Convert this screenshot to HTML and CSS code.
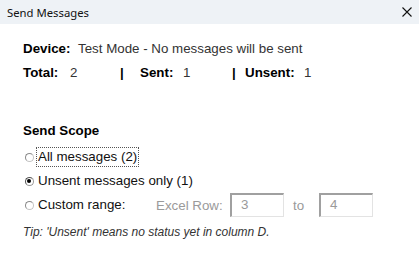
FILE: index.html
```html
<!DOCTYPE html>
<html>
<head>
<meta charset="utf-8">
<title>Send Messages</title>
<link rel="stylesheet" href="styles.css">
</head>
<body>
<div class="window">
  <div class="titlebar">
    <span class="title">Send Messages</span>
    <svg class="close" width="10" height="10" viewBox="0 0 10 10"><path d="M0.5 0.5 L9.5 9.5 M9.5 0.5 L0.5 9.5" stroke="#111" stroke-width="1.1" fill="none"/></svg>
  </div>
  <div class="content">
    <div class="row device-row">
      <span class="lbl w-device">Device:</span>
      <span class="val">Test Mode - No messages will be sent</span>
    </div>
    <div class="row counts-row">
      <span class="lbl w-total">Total:</span>
      <span class="val w-v1">2</span>
      <span class="lbl w-sep1">|</span>
      <span class="lbl w-sent">Sent:</span>
      <span class="val w-v2">1</span>
      <span class="lbl w-sep2">|</span>
      <span class="lbl w-unsent">Unsent:</span>
      <span class="val">1</span>
    </div>

    <div class="row scope-title">Send Scope</div>

    <div class="radio-row first-radio">
      <span class="radio"></span>
      <span class="rlabel focused">All messages (2)</span>
    </div>
    <div class="radio-row">
      <span class="radio checked"></span>
      <span class="rlabel">Unsent messages only (1)</span>
    </div>
    <div class="radio-row custom-row">
      <span class="radio"></span>
      <span class="rlabel w-custom">Custom range:</span>
      <span class="dim w-excel">Excel Row:</span>
      <span class="box">3</span>
      <span class="dim w-to">to</span>
      <span class="box">4</span>
    </div>
    <div class="tip">Tip: 'Unsent' means no status yet in column D.</div>
  </div>
</div>
</body>
</html>
```
FILE: styles.css
```css
html, body {
  margin: 0;
  padding: 0;
  background: #ffffff;
}
body {
  font-family: "Liberation Sans", Arial, sans-serif;
  font-size: 13.33px;
  color: #000;
}
.window {
  width: 419px;
  height: 255px;
  background: #fff;
}
.titlebar {
  height: 24px;
  background: #eef2f6;
  display: flex;
  align-items: center;
  justify-content: space-between;
  padding: 0 7px 0 7px;
}
.title {
  font-family: "Noto Sans", "Open Sans", sans-serif;
  font-size: 11.3px;
  color: #111;
}
.close {
  display: block;
}
.content {
  padding: 17px 0 0 23px;
}
.row {
  display: flex;
  align-items: center;
  height: 16px;
  line-height: 16px;
  white-space: nowrap;
}
.counts-row {
  margin-top: 8px;
}
.lbl {
  font-weight: bold;
  color: #000;
}
.val {
  color: #333;
}
.w-device { width: 55px; }
.w-total { width: 47px; }
.w-v1 { width: 50px; }
.w-sep1 { width: 20px; }
.w-sent { width: 43px; }
.w-v2 { width: 49px; }
.w-sep2 { width: 13px; }
.w-unsent { width: 59px; }

.scope-title {
  margin-top: 42px;
  font-weight: bold;
}
.radio-row {
  display: flex;
  align-items: center;
  height: 24px;
  white-space: nowrap;
}
.first-radio { margin-top: 6px; }
.custom-row { margin-top: 0; }
.radio {
  width: 9px;
  height: 9px;
  border-radius: 50%;
  box-sizing: border-box;
  border: 1px solid #8a8a8a;
  border-right-color: #c4c4c4;
  border-bottom-color: #c4c4c4;
  background: #fff;
  margin-left: 1.5px;
  margin-right: 2.5px;
  position: relative;
}
.radio.checked {
  border-color: #555;
  border-right-color: #999;
  border-bottom-color: #999;
}
.radio.checked::after {
  content: "";
  position: absolute;
  left: 1.5px;
  top: 1.5px;
  width: 4px;
  height: 4px;
  border-radius: 50%;
  background: #000;
}
.rlabel {
  color: #111;
  line-height: 16px;
  padding: 1px 1px;
  border: 1px solid transparent;
}
.rlabel.focused {
  border: 1px dotted #555;
  padding: 1px 1px 1px 1px;
}
.w-custom { width: 116px; }
.dim {
  color: #9a9a9a;
}
.w-excel { width: 74px; }
.w-to { width: 35px; padding-left: 9px; box-sizing: border-box; }
.box {
  width: 54px;
  height: 24px;
  box-sizing: border-box;
  border: 1px solid #a0a0a0;
  border-right-color: #e3e3e3;
  border-bottom-color: #e3e3e3;
  border-left-width: 2px;
  border-top-width: 2px;
  color: #9a9a9a;
  line-height: 20px;
  padding-left: 9px;
}
.tip {
  margin-top: 7px;
  height: 16px;
  line-height: 16px;
  font-style: italic;
  font-size: 12px;
  color: #333;
}
```
